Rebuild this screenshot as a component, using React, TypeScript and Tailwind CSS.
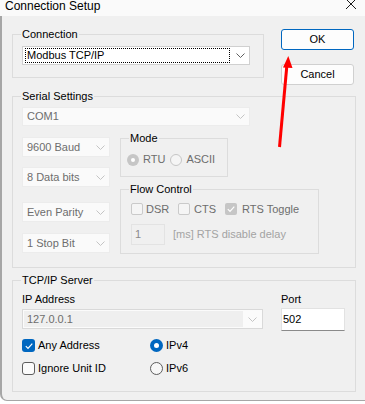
import React from "react";

function Chevron({ muted }: { muted?: boolean }) {
  return (
    <svg width="9" height="5" viewBox="0 0 9 5" className="shrink-0">
      <path
        d="M0.5 0.5 L4.5 4.5 L8.5 0.5"
        fill="none"
        stroke={muted ? "#c4c4c4" : "#5f5f5f"}
        strokeWidth="1"
      />
    </svg>
  );
}

function Check({ color = "#ffffff" }: { color?: string }) {
  return (
    <svg width="10" height="10" viewBox="0 0 10 10">
      <path d="M1.8 5.2 L4 7.4 L8.3 2.6" fill="none" stroke={color} strokeWidth="1.2" />
    </svg>
  );
}

function GroupBox({
  label,
  className,
  children,
}: {
  label: string;
  className: string;
  children: React.ReactNode;
}) {
  return (
    <div className={`relative border border-[#dcdcdc] ${className}`}>
      <span className="absolute -top-[7px] left-[8px] bg-[#f0f0f0] px-[1px] leading-[13px]">
        {label}
      </span>
      {children}
    </div>
  );
}

function DisabledCombo({ value, className }: { value: string; className: string }) {
  return (
    <div
      className={`flex items-center justify-between border border-[#ececec] bg-[#fafafa] pl-[4px] pr-[4px] text-[#6d6d6d] ${className}`}
    >
      <span>{value}</span>
      <Chevron muted />
    </div>
  );
}

function GrayBox({ checked }: { checked?: boolean }) {
  return checked ? (
    <span className="flex h-[12px] w-[12px] items-center justify-center rounded-[2px] bg-[#c6c6c6]">
      <Check />
    </span>
  ) : (
    <span className="h-[12px] w-[12px] rounded-[2px] border border-[#cacaca] bg-[#f5f5f5]" />
  );
}

export default function App() {
  return (
    <div className="relative h-[404px] w-[365px] overflow-hidden bg-white font-['Liberation_Sans',Arial,sans-serif] text-[11px] leading-[13px] text-black">
      {/* title bar */}
      <div className="flex h-[16px] items-start justify-between bg-[#fafafa] pl-[5px] pr-[8px]">
        <span className="text-[12px] leading-[12px]">Connection Setup</span>
        <svg width="12" height="12" viewBox="0 0 12 12" className="-mt-[2px]">
          <path d="M1 1 L11 11 M11 1 L1 11" stroke="#1a1a1a" strokeWidth="1" />
        </svg>
      </div>

      {/* dialog body */}
      <div className="flex h-[385px] flex-col rounded-bl-[7px] border-b border-l-2 border-[#a6a6a6] bg-[#f0f0f0] pl-[10px]">
        <div className="flex items-start pt-[13px]">
          <GroupBox label="Connection" className="mt-[5px] w-[252px] pb-[12px] pl-[9px] pt-[11px]">
            <div className="flex h-[19px] w-[228px] items-center justify-between border border-[#d0d0d0] bg-white pl-[2px] pr-[4px]">
              <span className="flex h-[15px] w-[205px] items-center border border-dotted border-black pl-[1px]">
                Modbus TCP/IP
              </span>
              <Chevron />
            </div>
          </GroupBox>
          <div className="ml-[17px] flex w-[73px] flex-col gap-[14px]">
            <button className="flex h-[21px] items-center justify-center rounded-[3px] border border-[#0067c0] bg-[#fdfdfd] text-[11px]">
              OK
            </button>
            <button className="flex h-[21px] items-center justify-center rounded-[3px] border border-[#d0d0d0] bg-[#fdfdfd] text-[11px]">
              Cancel
            </button>
          </div>
        </div>

        <GroupBox label="Serial Settings" className="mt-[11px] w-[344px] pb-[13px] pl-[9px] pt-[10px]">
          <DisabledCombo value="COM1" className="h-[19px] w-[228px]" />
          <div className="mt-[11px] flex items-start">
            <div className="flex w-[88px] flex-col">
              <DisabledCombo value="9600 Baud" className="h-[20px]" />
              <DisabledCombo value="8 Data bits" className="mt-[10px] h-[20px]" />
              <DisabledCombo value="Even Parity" className="mt-[15px] h-[20px]" />
              <DisabledCombo value="1 Stop Bit" className="mt-[11px] h-[20px]" />
            </div>
            <div className="ml-[10px] flex flex-col">
              <GroupBox label="Mode" className="mt-[1px] h-[39px] w-[108px] pl-[6px] pt-[14px]">
                <div className="flex items-center text-[#6d6d6d]">
                  <span className="flex h-[12px] w-[12px] items-center justify-center rounded-full bg-[#c6c6c6]">
                    <span className="h-[4px] w-[4px] rounded-full bg-white" />
                  </span>
                  <span className="ml-[4px]">RTU</span>
                  <span className="ml-[5px] h-[12px] w-[12px] rounded-full border border-[#c6c6c6] bg-[#f5f5f5]" />
                  <span className="ml-[4px]">ASCII</span>
                </div>
              </GroupBox>
              <GroupBox label="Flow Control" className="mt-[12px] h-[65px] w-[199px] pl-[10px] pt-[13px]">
                <div className="flex h-[12px] items-center text-[#6d6d6d]">
                  <div className="flex w-[47px] items-center gap-[3px]">
                    <GrayBox />
                    <span>DSR</span>
                  </div>
                  <div className="flex w-[47px] items-center gap-[4px]">
                    <GrayBox />
                    <span>CTS</span>
                  </div>
                  <div className="flex items-center gap-[5px]">
                    <GrayBox checked />
                    <span>RTS Toggle</span>
                  </div>
                </div>
                <div className="mt-[9px] flex items-center">
                  <div className="flex h-[21px] w-[34px] items-center border border-[#e3e3e3] bg-[#f0f0f0] pl-[3px] text-[#8a8a8a]">
                    1
                  </div>
                  <span className="ml-[8px] text-[#a3a3a3]">[ms] RTS disable delay</span>
                </div>
              </GroupBox>
            </div>
          </div>
        </GroupBox>

        <GroupBox label="TCP/IP Server" className="mt-[12px] w-[344px] pb-[16px] pl-[9px] pt-[12px]">
          <div className="flex items-start">
            <div className="flex w-[241px] flex-col">
              <span>IP Address</span>
              <div className="mt-[3px] flex h-[20px] items-stretch border border-[#d9d9d9] bg-[#fbfbfb] p-[1px]">
                <span className="flex flex-1 items-center bg-[#efefef] pl-[3px] text-[#6d6d6d]">127.0.0.1</span>
                <span className="flex w-[18px] items-center justify-center">
                  <Chevron muted />
                </span>
              </div>
            </div>
            <div className="ml-[18px] flex flex-col">
              <span>Port</span>
              <div className="mt-[2px] flex h-[23px] w-[64px] items-center border border-b-[#8a8a8a] border-[#e2e2e2] bg-white pl-[1px]">
                502
              </div>
            </div>
          </div>
          <div className="mt-[8px] flex h-[13px] items-center">
            <div className="flex w-[128px] items-center gap-[3px]">
              <span className="flex h-[13px] w-[13px] items-center justify-center rounded-[3px] bg-[#0067c0]">
                <Check />
              </span>
              <span>Any Address</span>
            </div>
            <div className="flex items-center gap-[3px]">
              <span className="flex h-[13px] w-[13px] items-center justify-center rounded-full bg-[#0067c0]">
                <span className="h-[5px] w-[5px] rounded-full bg-white" />
              </span>
              <span>IPv4</span>
            </div>
          </div>
          <div className="mt-[10px] flex h-[13px] items-center">
            <div className="flex w-[128px] items-center gap-[3px]">
              <span className="h-[13px] w-[13px] rounded-[3px] border border-[#5d5d5d] bg-[#fbfbfb]" />
              <span>Ignore Unit ID</span>
            </div>
            <div className="flex items-center gap-[3px]">
              <span className="h-[13px] w-[13px] rounded-full border border-[#5d5d5d] bg-[#f7f7f7]" />
              <span>IPv6</span>
            </div>
          </div>
        </GroupBox>
      </div>

      {/* red annotation arrow */}
      <svg
        className="pointer-events-none absolute left-0 top-0"
        width="365"
        height="404"
        viewBox="0 0 365 404"
      >
        <line x1="279.5" y1="147" x2="287" y2="64" stroke="#ff0000" strokeWidth="3" />
        <polygon points="288.3,56 283,67.5 292.5,68" fill="#ff0000" />
      </svg>
    </div>
  );
}
